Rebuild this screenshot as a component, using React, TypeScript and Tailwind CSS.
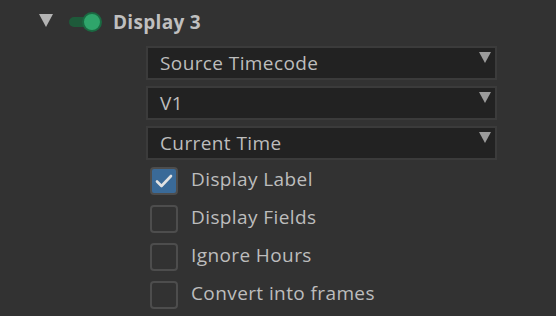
import React from "react";

const font = { fontFamily: '"Open Sans", "Liberation Sans", sans-serif' };

function Caret() {
    return (
        <svg width="12" height="11" viewBox="0 0 12 11" className="shrink-0">
            <path d="M0 0 H12 L6 11 Z" fill="#9b9b9b" />
        </svg>
    );
}

function Select({ value }: { value: string }) {
    return (
        <div className="flex h-[34px] border-2 border-[#3b3b3b] bg-[#222222] pl-3 pr-[4px]">
            <span className="flex-1 self-center text-[19px] leading-none tracking-[0.4px] text-[#bdbdbd]">{value}</span>
            <div className="pt-[4px]">
                <Caret />
            </div>
        </div>
    );
}

function Check({ label, checked }: { label: string; checked?: boolean }) {
    return (
        <div className="flex h-[38px] items-start gap-[13px] pt-[1px]">
            {checked ? (
                <div className="flex h-[28px] w-[28px] items-center justify-center rounded-[4px] border-2 border-[#4d4d4d] bg-[#3a6a98]">
                    <svg width="18" height="14" viewBox="0 0 18 14">
                        <path d="M2 7.5 L6.5 12 L16 2" fill="none" stroke="#e2e2e2" strokeWidth="2.6" strokeLinecap="round" strokeLinejoin="round" />
                    </svg>
                </div>
            ) : (
                <div className="h-[28px] w-[28px] rounded-[4px] border-2 border-[#4d4d4d]" />
            )}
            <span className="pt-[1px] text-[19px] leading-[22px] tracking-[0.4px] text-[#bdbdbd]">{label}</span>
        </div>
    );
}

export default function App() {
    return (
        <div className="h-[316px] w-[556px] overflow-hidden bg-[#323232]" style={font}>
            {/* Header row */}
            <div className="flex h-[46px] items-start pl-[39px] pt-[12px]">
                <svg width="14" height="13" viewBox="0 0 14 13" className="mt-[2px]">
                    <path d="M0 0 H14 L7 13 Z" fill="#b3b3b3" />
                </svg>
                <div className="relative ml-[16px] h-[20px] w-[34px]">
                    <div className="absolute left-0 top-[5px] h-[10px] w-[20px] rounded-full bg-[#1e5a3a]" />
                    <div className="absolute left-[13px] top-0 h-[20px] w-[20px] rounded-full border-2 border-[#1a6a42] bg-[#2fa56b]" />
                </div>
                <span className="ml-[10px] text-[19px] font-bold leading-[20px] tracking-[0.3px] text-[#bfbfbf]">Display 3</span>
            </div>

            <div className="ml-[146px] mr-[59px] flex flex-col gap-[6px]">
                <Select value="Source Timecode" />
                <Select value="V1" />
                <Select value="Current Time" />
            </div>

            <div className="ml-[150px] mt-[6px] flex flex-col">
                <Check label="Display Label" checked />
                <Check label="Display Fields" />
                <Check label="Ignore Hours" />
                <Check label="Convert into frames" />
            </div>
        </div>
    );
}
